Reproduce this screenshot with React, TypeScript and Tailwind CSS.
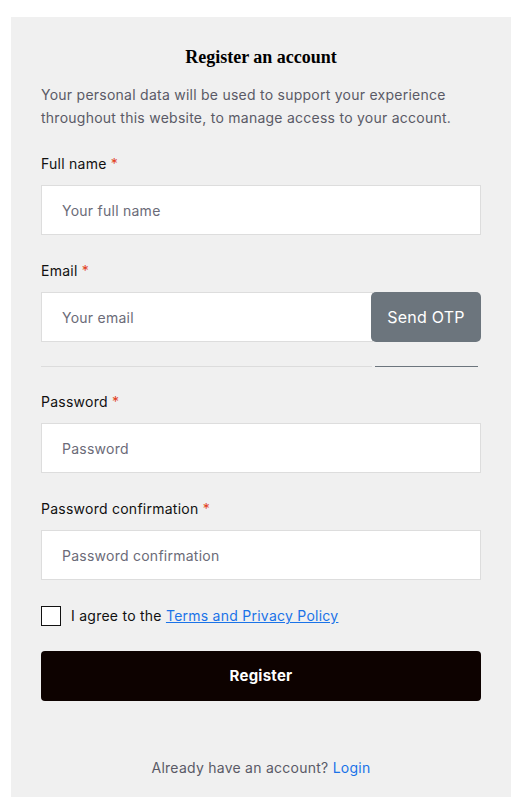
import React from "react";

const font = { fontFamily: "Inter, 'Open Sans', sans-serif", letterSpacing: "0.25px" };

function Field({ label, placeholder }: { label: string; placeholder: string }) {
  return (
    <div className="flex flex-col">
      <label className="text-[14px] leading-[20px] text-[#111]">
        {label} <span className="text-[#e2401c]">*</span>
      </label>
      <input
        placeholder={placeholder}
        className="mt-[11px] h-[50px] w-full border border-[#dddddd] bg-white px-[20px] text-[14px] text-[#333] placeholder:text-[#6b6b78] outline-none"
      />
    </div>
  );
}

export default function App() {
  return (
    <div className="min-h-[797px] bg-white pt-[17px] pl-[11px]" style={font}>
      <div className="w-[500px] bg-[#f0f0f0] px-[30px] pt-[29px] pb-[20px]">
        <h2
          className="text-center text-[18px] font-bold leading-[22px] tracking-normal text-black"
          style={{ fontFamily: "'Liberation Serif', serif", letterSpacing: 0 }}
        >
          Register an account
        </h2>
        <p className="mt-[15px] text-[14px] leading-[23px] text-[#5a5a66]">
          Your personal data will be used to support your experience throughout this website, to manage access to your account.
        </p>
        <div className="mt-[25px] flex flex-col gap-[26px]">
          <Field label="Full name" placeholder="Your full name" />
          <div className="flex flex-col">
            <label className="text-[14px] leading-[20px] text-[#111]">
              Email <span className="text-[#e2401c]">*</span>
            </label>
            <div className="mt-[11px] flex">
              <input
                placeholder="Your email"
                className="h-[50px] flex-1 border border-[#dddddd] bg-white px-[20px] text-[14px] placeholder:text-[#6b6b78] outline-none"
              />
              <button className="-ml-[2px] h-[50px] w-[110px] rounded-[5px] bg-[#6c757d] text-[16px] text-white">
                Send OTP
              </button>
            </div>
            <div className="mt-[24px] -mb-px flex items-center">
              <div className="h-px w-[331px] bg-[#dcdcdc]" />
              <div className="ml-[3px] h-px w-[103px] bg-[#6c757d]" />
            </div>
          </div>
          <Field label="Password" placeholder="Password" />
          <Field label="Password confirmation" placeholder="Password confirmation" />
        </div>
        <div className="mt-[25px] flex items-center gap-[10px]">
          <span className="h-[20px] w-[20px] border border-[#111] bg-white" />
          <span className="text-[14px] text-[#111]">
            I agree to the{" "}
            <a href="#" className="text-[#1a73e8] underline">
              Terms and Privacy Policy
            </a>
          </span>
        </div>
        <button className="mt-[25px] h-[50px] w-full rounded-[4px] bg-[#0d0200] text-[15px] font-bold text-white">
          Register
        </button>
        <p className="mt-[56px] text-center text-[14px] text-[#5a5a66]">
          Already have an account?{" "}
          <a href="#" className="text-[#1a73e8]">Login</a>
        </p>
      </div>
    </div>
  );
}
